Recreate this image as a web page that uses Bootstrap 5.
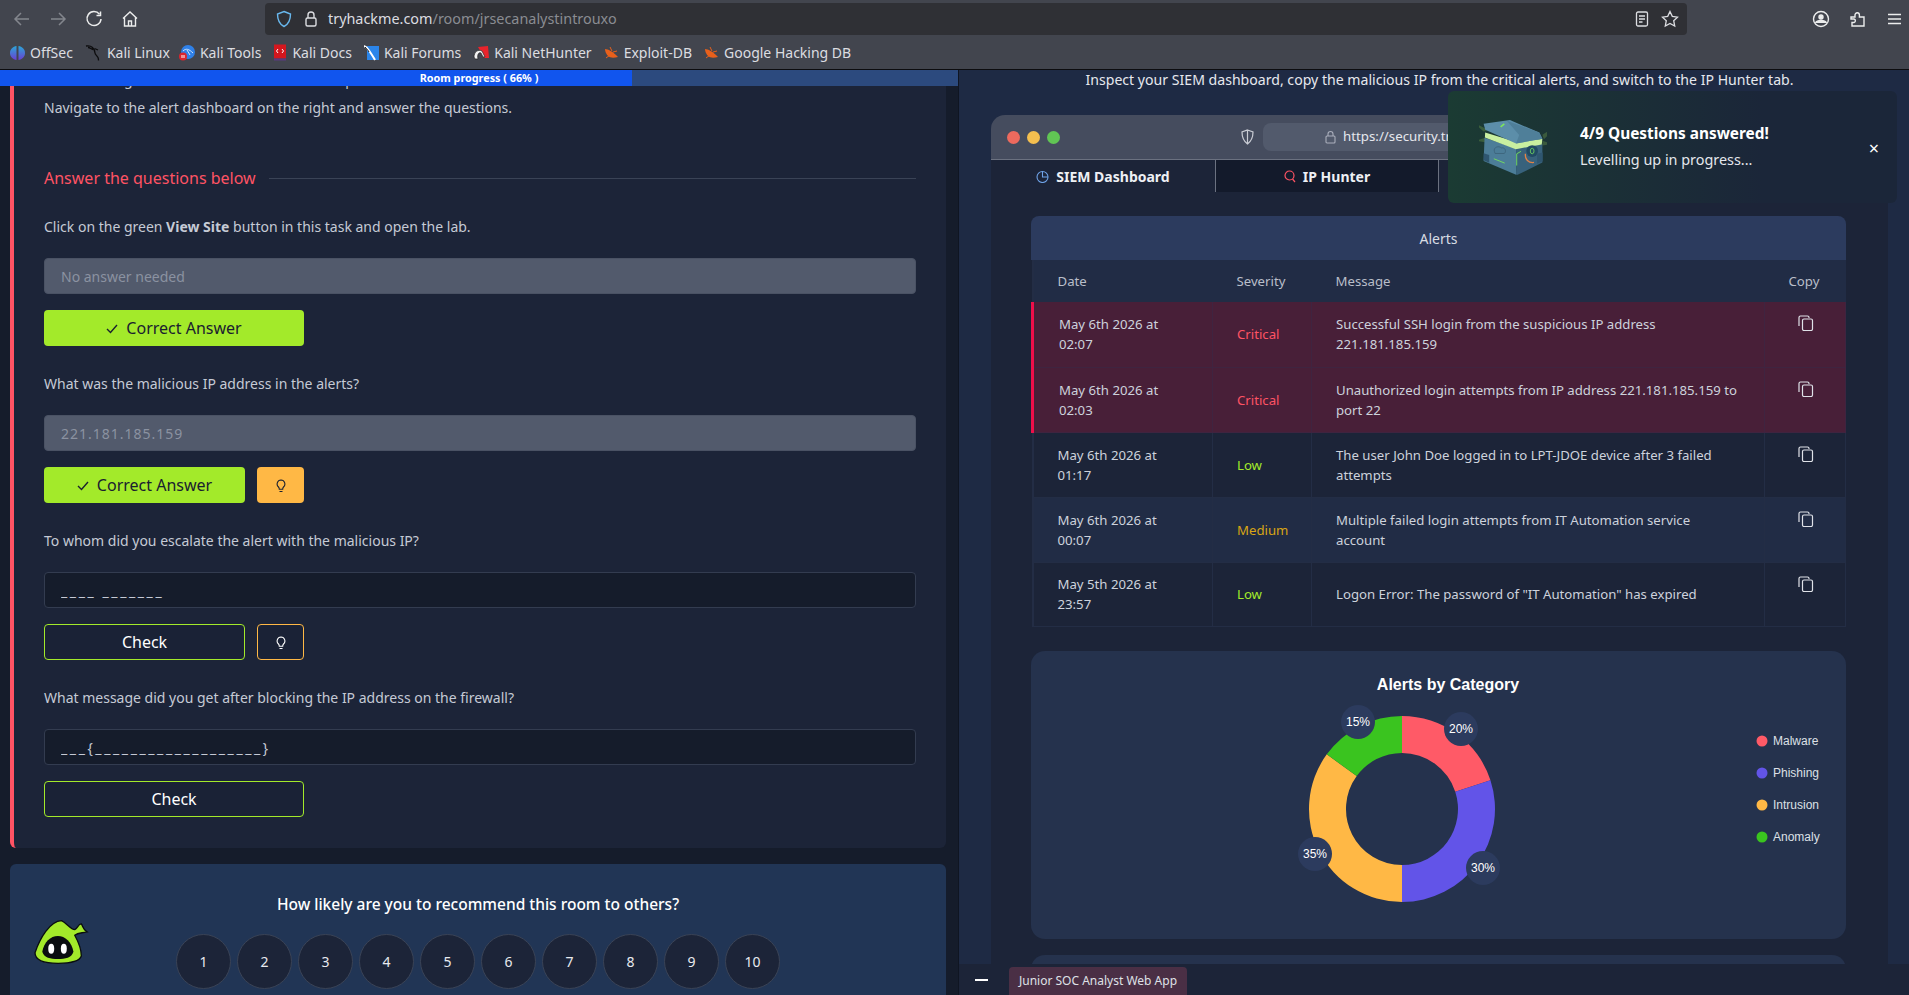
<!DOCTYPE html>
<html lang="en">
<head>
    <meta charset="UTF-8">
    <meta name="viewport" content="width=device-width, initial-scale=1.0">
    <title>TryHackMe | Junior Security Analyst Intro</title>
    <link href="https://cdn.jsdelivr.net/npm/bootstrap@5.3.0/dist/css/bootstrap.min.css" rel="stylesheet">
    <style>
        html, body { height: 995px; overflow: hidden; }
        body { background: #151c2b; font-family: "Noto Sans", sans-serif; font-size: 14px; color: #c5cad5; }

        /* browser chrome */
        .ff-chrome { height: 70px; background: #42454e; border-bottom: 1px solid #0c0c0f; color: #dcdde1; }
        .ff-nav { height: 36px; padding-top: 2px; }
        .ff-btns { width: 265px; padding-left: 13px; gap: 18px; }
        .ff-url { width: 1422px; height: 32px; background: #2f3035; border-radius: 4px; padding: 0 8px 0 11px; font-size: 14.4px; }
        .ff-url span { color: #dcdde1; margin-left: 2px !important; }
        .ff-url em { color: #8a8c92; font-style: normal; }
        .ff-right { gap: 19px; margin-left: 125px; }
        .ff-marks { height: 33px; padding-left: 10px; font-size: 14px; white-space: nowrap; }
        .ff-mark { gap: 5px; margin-right: 12px; }
        .ff-mark.ff-mark-tight { margin-right: 9px; }
        .ff-mark svg { flex: none; }

        .stage { height: 925px; }

        /* left column */
        .room-col { width: 958px; flex: none; background: #151c2b; overflow: hidden; }
        .room-progress { position: relative; z-index: 2; height: 16px; background: #2c4a7e; }
        .room-progress-fill { width: 66%; background: #1155ee; }
        .room-progress-text { position: absolute; inset: 0; text-align: center; line-height: 16px; font-size: 10.8px; font-weight: 700; color: #fff; }
        .task-box { margin: 0 12px 16px 10px; padding: 0 30px 31px; background: #1c2438; border-left: 4px solid #ff5364; border-radius: 0 0 6px 6px; line-height: 24px; }
        .task-lead { margin: -18px 0 4px; }
        .task-nav { margin: 0 0 46px; }
        .answer-head { color: #ff5364; font-size: 16px; height: 24px; margin-bottom: 24px; gap: 13px; }
        .answer-rule { height: 1px; background: #3a4356; }
        .q-block { margin-bottom: 25px; }
        .q-block:last-child { margin-bottom: 0; }
        .q-text { margin: 0 0 20px; padding-top: 1px; height: 24px; }
        .q-input { height: 36px; margin-bottom: 16px; padding: 0 16px; font-size: 14px; border: 1px solid #333c50; border-radius: 4px; }
        .q-input.form-control { background: #151c2b; color: #c5cad5; }
        .q-input.form-control::placeholder { color: #c5cad5; opacity: 1; }
        .q-input.form-control:disabled { background: #525a6c; border-color: #4a5264; }
        .q-input.form-control:disabled::placeholder { color: #8b92a1; }
        .q-input.q-ip::placeholder { letter-spacing: 1px; }
        .q-input.q-blank::placeholder { letter-spacing: 2.6px; }
        .q-btn { height: 36px; padding: 0 0 1px; font-size: 16px; border-radius: 4px; line-height: 1; }
        .q-wide { width: 260px; }
        .q-short { width: 201px; }
        .q-hint { width: 47px; margin-left: 12px; }
        .q-done, .q-done:disabled { background: #a3ea2a; border: 0; color: #1a2030; opacity: 1; }
        .q-check { background: #1a2236; border: 1px solid #a3ea2a; color: #fff; }
        .q-hint-on { background: #ffb845; border: 0; color: #1a2030; }
        .q-hint-off { background: #1a2236; border: 1px solid #ffb845; color: #fff; }

        .rate-box { margin: 0 12px 0 10px; height: 140px; background: #213555; border-radius: 6px 6px 0 0; display: grid; grid-template-columns: 1fr auto 1fr; }
        .rate-mascot { padding: 54px 0 0 23px; }
        .rate-title { margin: 29px 0 19px; text-align: center; color: #fff; font-size: 15.5px; font-weight: 500; line-height: 22px; }
        .rate-dots { gap: 6px; }
        .rate-dot { width: 55px; height: 55px; border-radius: 50%; background: #1c2438; border: 1px solid #3a4356; color: #e8eaef; display: flex; align-items: center; justify-content: center; font-size: 14px; }

        /* right column */
        .lab-col { position: relative; background: #1e2a44; border-left: 1px solid #0f1522; }
        .lab-scroll { height: 894px; overflow: hidden; padding: 0 23px 0 32px; }
        .lab-intro { height: 45px; text-align: center; color: #e6e8ee; font-size: 14.1px; line-height: 20px; }
        .mock-head { position: relative; height: 45px; background: #454c5e; border-radius: 14px 14px 0 0; border-bottom: 1px solid #6b7180; }
        .mock-dots { position: absolute; left: 16px; top: 16px; gap: 7px; }
        .mock-dot { width: 13px; height: 13px; border-radius: 50%; }
        .mock-shield { position: absolute; left: 250px; top: 14px; }
        .mock-url { position: absolute; left: 272px; top: 8px; width: 500px; height: 28px; background: #525a6c; border-radius: 8px; padding-left: 62px; gap: 7px; color: #e6e8ee; font-size: 13.3px; white-space: nowrap; overflow: hidden; }
        .mock-tabs { height: 32px; background: #1c2438; }
        .mock-tab { width: 223px; gap: 7px; border-right: 1px solid #6b7180; color: #eef0f4; font-weight: 700; font-size: 14px; }
        .mock-tab:first-child { width: 225px; }
        .mock-tab-off { background: #131a2b; }
        .mock-body { background: #1c2438; padding: 24px 42px 0 40px; }
        .alerts-box { border-radius: 8px 8px 0 0; overflow: hidden; }
        .alerts-title { height: 44px; background: #2c3b5e; color: #d8dce4; font-size: 14px; }
        .alerts-tbl { table-layout: fixed; width: 100%; font-size: 13.2px; line-height: 20px; --bs-table-bg: transparent; --bs-table-color: #cdd2dc; }
        .alerts-tbl th { height: 42px; padding: 0 0 0 24px; font-weight: 400; color: #b9bec9; background: #212c45; border: 0; vertical-align: middle; }
        .alerts-tbl td { height: 65px; padding: 0 24px; background: #1c2438; border: 0; border-right: 1px solid #232d45; border-bottom: 1px solid #232d45; vertical-align: middle; }
        .alerts-tbl th:first-child, .alerts-tbl td:first-child { border-left: 2px solid #232d45; }
        .alerts-tbl tr.row-crit td { background: #481f38; border-color: #3f2440; }
        .alerts-tbl tr.row-crit td:first-child { border-left: 3px solid #ef0f4a; padding-left: 25px; }
        .alerts-tbl tr.row-mid td { background: #212c45; }
        .alerts-tbl tr:last-child td { height: 64px; }
        .alerts-tbl td.cell-copy { vertical-align: top; padding: 10px 0 0 33px; }
        .sev-crit { color: #ff5364; }
        .sev-low { color: #a3ea2a; }
        .sev-mid { color: #d9a514; }
        .chart-box { margin-top: 24px; height: 288px; background: #25324d; border-radius: 14px; }
        .chart-box + .chart-box { margin-top: 16px; }
        .chart-txt { font-family: "Liberation Sans", sans-serif; }

        .lab-bar { height: 31px; background: #1c2438; padding-left: 16px; }
        .lab-min { width: 13px; height: 2px; background: #fff; margin-right: 21px; }
        .lab-tab { width: 178px; height: 28px; margin-top: 3px; background: #4a2f45; border-radius: 4px 4px 0 0; color: #dfe1e7; font-size: 12px; }

        .reward-toast { position: absolute; left: 489px; top: 21px; width: 449px; height: 112px; padding-left: 31px; border-radius: 6px; background: linear-gradient(90deg, #1b3b33 0, #1b3036 35%, #1b2639 70%); color: #fff; }
        .reward-chest { margin-right: 33px; }
        .reward-title { font-weight: 700; font-size: 15.4px; line-height: 24px; }
        .reward-sub { font-size: 14.4px; line-height: 24px; margin-top: 2px; color: #e4e7ec; }
        .reward-close { position: absolute; right: 18px; top: 47px; color: #fff; font-size: 18px; line-height: 20px; }
    </style>
</head>
<body>
    <!-- firefox toolbar -->
    <div class="ff-chrome">
        <div class="ff-nav d-flex align-items-center">
            <div class="ff-btns d-flex align-items-center">
                <svg width="18" height="18" viewBox="0 0 18 18" fill="none" stroke="#83868d" stroke-width="1.5"><path d="M16 9H2M8 3 2 9l6 6"/></svg>
                <svg width="18" height="18" viewBox="0 0 18 18" fill="none" stroke="#83868d" stroke-width="1.5"><path d="M2 9h14M10 3l6 6-6 6"/></svg>
                <svg width="18" height="18" viewBox="0 0 18 18" fill="none" stroke="#eceded" stroke-width="1.5"><path d="M14.5 4.2A7 7 0 1 0 16 9"/><path d="M15.5 1.5v4h-4" /></svg>
                <svg width="18" height="18" viewBox="0 0 18 18" fill="none" stroke="#eceded" stroke-width="1.4"><path d="M2 8.5 9 2l7 6.5M3.5 7.5V16h11V7.5M7.5 16v-5h3v5"/></svg>
            </div>
            <div class="ff-url d-flex align-items-center">
                <svg width="16" height="18" viewBox="0 0 16 18" fill="none" stroke="#69b8ee" stroke-width="1.4" class="me-2"><path d="M8 1.5 14.5 4c0 6-1.500 10-6.500 12.500C3 14 1.500 10 1.500 4z"/></svg>
                <svg width="14" height="18" viewBox="0 0 14 18" fill="none" stroke="#dcdde1" stroke-width="1.4" class="ms-1 me-2"><rect x="2" y="8" width="10" height="8" rx="1.500"/><path d="M4 8V5a3 3 0 0 1 6 0v3"/></svg>
                <span>tryhackme.com</span><em>/room/jrsecanalystintrouxo</em>
                <svg width="14" height="16" viewBox="0 0 14 16" fill="none" stroke="#dcdde1" stroke-width="1.300" class="ms-auto me-2"><rect x="1.500" y="1" width="11" height="14" rx="1.500"/><path d="M4 5h6M4 8h6M4 11h3.500"/></svg>
                <svg width="18" height="18" viewBox="0 0 18 18" fill="none" stroke="#dcdde1" stroke-width="1.300" class="ms-1"><path d="m9 1.500 2.300 4.900 5.200.7-3.800 3.600 1 5.300L9 13.400 4.300 16l1-5.300L1.500 7.100l5.200-.7z"/></svg>
            </div>
            <div class="ff-right d-flex align-items-center">
                <svg width="18" height="18" viewBox="0 0 18 18" fill="none" stroke="#eceded" stroke-width="1.400"><circle cx="9" cy="9" r="7.500"/><circle cx="9" cy="7" r="2" fill="#eceded"/><path d="M3.500 13c1-2 3-2.500 5.500-2.500s4.500.5 5.500 2.500" fill="#eceded"/></svg>
                <svg width="18" height="18" viewBox="0 0 18 18" fill="none" stroke="#eceded" stroke-width="1.400"><path d="M2 7h4V5a2.200 2.200 0 0 1 4.400 0v2H15v9H3v-3.500h2a1.800 1.800 0 0 0 0-3.500H2z"/></svg>
                <svg width="16" height="14" viewBox="0 0 16 14" stroke="#eceded" stroke-width="1.400"><path d="M2 2.500h13M2 7h13M2 11.500h13"/></svg>
            </div>
        </div>
        <div class="ff-marks d-flex align-items-center">
            <div class="ff-mark d-flex align-items-center">
                <svg width="15" height="16" viewBox="0 0 15 16"><defs><linearGradient id="oc" x1="0" y1="0" x2="0" y2="1"><stop offset="0" stop-color="#2ba6d8"/><stop offset="1" stop-color="#6a3fd0"/></linearGradient></defs><path d="M6.500 1C3 1.500 0 4 0 8s3 6.500 6.500 7z" fill="url(#oc)"/><path d="M8.500 1c3.500.5 6.500 3 6.500 7s-3 6.500-6.500 7z" fill="url(#oc)"/></svg>OffSec
            </div>
            <div class="ff-mark ff-mark-tight d-flex align-items-center">
                <svg width="17" height="17" viewBox="0 0 17 17" fill="none" stroke="#0c0c0e" stroke-width="1.300"><path d="M1 2c3-.5 5 0 6.500 1.500 2 2 2.500 3.500 2.500 5.500 0 1.500 2 2.500 3 4.500.4 1 .5 2 .5 3M3 3.500C5 3.500 6 5 8 5.500M9.500 4.500 13 6"/></svg>Kali Linux
            </div>
            <div class="ff-mark d-flex align-items-center">
                <svg width="16" height="16" viewBox="0 0 16 16"><circle cx="9" cy="7" r="7" fill="#2f80e8"/><path d="M4 6c3-3 6-2 10 2M8 5l3 5" stroke="#cfe4fb" fill="none"/><circle cx="4" cy="11.500" r="4" fill="#d9252e"/><path d="M3 10v3M5 10v3" stroke="#fff"/></svg>Kali Tools
            </div>
            <div class="ff-mark d-flex align-items-center">
                <svg width="14" height="17" viewBox="0 0 14 17"><rect x="1" y="0.500" width="12" height="14" fill="#d4171e"/><rect x="1" y="14.500" width="12" height="2" fill="#5a3a80"/><path d="M5 5 3.500 7 5 9M9 5l1.500 2L9 9" stroke="#fff" fill="none"/></svg>Kali Docs
            </div>
            <div class="ff-mark d-flex align-items-center">
                <svg width="15" height="16" viewBox="0 0 15 16"><path d="M3 1h12v14H3z" fill="#2b85ea"/><path d="M0 1c3 1 4 3 6 6s4 6 5 8" stroke="#fff" stroke-width="2" fill="none"/><path d="M1 2c2 2 3 3 4 5" stroke="#222" fill="none"/></svg>Kali Forums
            </div>
            <div class="ff-mark d-flex align-items-center">
                <svg width="16" height="16" viewBox="0 0 16 16"><path d="M5 2 15 1l1 12-5 0z" fill="#e8242c"/><path d="M1 12C1 7 5 4 9 6l3 6h-2L8 8C6 7 4 9 5 14H2z" fill="#f2f2f2" stroke="#222" stroke-width=".7"/></svg>Kali NetHunter
            </div>
            <div class="ff-mark d-flex align-items-center">
                <svg width="15" height="14" viewBox="0 0 15 14"><path d="M1 3c3 0 8 3 11 6l2 2c-4 1-8 1-10-1S1 5 1 3z" fill="#e8601c"/><path d="M6 1l2 4M2 12l4-3M13 5l-4 1" stroke="#e8601c" fill="none"/></svg>Exploit-DB
            </div>
            <div class="ff-mark d-flex align-items-center">
                <svg width="15" height="14" viewBox="0 0 15 14"><path d="M1 3c3 0 8 3 11 6l2 2c-4 1-8 1-10-1S1 5 1 3z" fill="#e8601c"/><path d="M6 1l2 4M2 12l4-3M13 5l-4 1" stroke="#e8601c" fill="none"/></svg>Google Hacking DB
            </div>
        </div>
    </div>

    <div class="stage d-flex">
        <!-- room column -->
        <div class="room-col">
            <div class="room-progress d-flex">
                <div class="room-progress-fill"></div>
                <div class="room-progress-text">Room progress ( 66% )</div>
            </div>
            <div class="task-box">
                <p class="task-lead">Click on the green View Site button above to open the attached lab.</p>
                <p class="task-nav">Navigate to the alert dashboard on the right and answer the questions.</p>
                <div class="answer-head d-flex align-items-center">
                    <span>Answer the questions below</span>
                    <div class="answer-rule flex-grow-1"></div>
                </div>

                <div class="q-block">
                    <p class="q-text">Click on the green <b>View Site</b> button in this task and open the lab.</p>
                    <input type="text" class="form-control q-input" placeholder="No answer needed" disabled>
                    <button class="btn q-btn q-done q-wide"><svg width="12" height="10" viewBox="0 0 12 10" fill="none" stroke="#1a2030" stroke-width="1.400" class="me-2"><path d="m1 5 3.500 3.500L11 1"/></svg>Correct Answer</button>
                </div>
                <div class="q-block">
                    <p class="q-text">What was the malicious IP address in the alerts?</p>
                    <input type="text" class="form-control q-input q-ip" placeholder="221.181.185.159" disabled>
                    <div class="d-flex">
                        <button class="btn q-btn q-done q-short"><svg width="12" height="10" viewBox="0 0 12 10" fill="none" stroke="#1a2030" stroke-width="1.400" class="me-2"><path d="m1 5 3.500 3.500L11 1"/></svg>Correct Answer</button>
                        <button class="btn q-btn q-hint q-hint-on"><svg width="10" height="14" viewBox="0 0 10 14" fill="none" stroke="#1a2030" stroke-width="1.100"><path d="M5 1a4 4 0 0 0-2.500 7c.6.600.8 1.500.8 2.200h3.400c0-.7.2-1.600.8-2.200A4 4 0 0 0 5 1zM3.500 12.500h3"/></svg></button>
                    </div>
                </div>
                <div class="q-block">
                    <p class="q-text">To whom did you escalate the alert with the malicious IP?</p>
                    <input type="text" class="form-control q-input q-blank" placeholder="____ _______">
                    <div class="d-flex">
                        <button class="btn q-btn q-check q-short">Check</button>
                        <button class="btn q-btn q-hint q-hint-off"><svg width="10" height="14" viewBox="0 0 10 14" fill="none" stroke="#fff" stroke-width="1.100"><path d="M5 1a4 4 0 0 0-2.500 7c.6.600.8 1.500.8 2.200h3.400c0-.7.2-1.600.8-2.200A4 4 0 0 0 5 1zM3.500 12.500h3"/></svg></button>
                    </div>
                </div>
                <div class="q-block">
                    <p class="q-text">What message did you get after blocking the IP address on the firewall?</p>
                    <input type="text" class="form-control q-input q-blank" placeholder="___{___________________}">
                    <button class="btn q-btn q-check q-wide">Check</button>
                </div>
            </div>

            <div class="rate-box">
                <div class="rate-mascot">
                    <svg width="57" height="48" viewBox="100 170 170 145">
                        <path d="M105 275C120 230 150 180 185 178c15 7 28 27 40 27 10-5 10-17 20-17 5 7 5 17 17 24-17 4-27 2-37 10 10 18 20 43 20 63-5 15-30 22-70 22s-70-7-70-32z" fill="#a3ea2a" stroke="#0a0d10" stroke-width="4"/>
                        <path d="M127 272c5-30 25-48 47-48s42 18 47 48c-5 18-25 22-47 22s-42-4-47-22z" fill="#0a0d10"/>
                        <ellipse cx="154" cy="263" rx="9" ry="15" fill="#fff"/>
                        <ellipse cx="192" cy="263" rx="9" ry="15" fill="#fff"/>
                    </svg>
                </div>
                <div>
                    <div class="rate-title">How likely are you to recommend this room to others?</div>
                    <div class="rate-dots d-flex">
                        <div class="rate-dot">1</div>
                        <div class="rate-dot">2</div>
                        <div class="rate-dot">3</div>
                        <div class="rate-dot">4</div>
                        <div class="rate-dot">5</div>
                        <div class="rate-dot">6</div>
                        <div class="rate-dot">7</div>
                        <div class="rate-dot">8</div>
                        <div class="rate-dot">9</div>
                        <div class="rate-dot">10</div>
                    </div>
                </div>
                <div></div>
            </div>
        </div>

        <!-- lab column -->
        <div class="lab-col flex-grow-1 d-flex flex-column">
            <div class="lab-scroll">
                <div class="lab-intro">Inspect your SIEM dashboard, copy the malicious IP from the critical alerts, and switch to the IP Hunter tab.</div>
                <div class="mock-head">
                    <div class="mock-dots d-flex">
                        <div class="mock-dot" style="background:#ed6a5e"></div>
                        <div class="mock-dot" style="background:#f5bf4f"></div>
                        <div class="mock-dot" style="background:#61c554"></div>
                    </div>
                    <svg class="mock-shield" width="13" height="16" viewBox="0 0 13 16" fill="none" stroke="#c9ccd4" stroke-width="1.200"><path d="M6.500 1 12 3c0 5-1.500 9-5.500 12C2.500 12 1 8 1 3zM6.500 1v14"/></svg>
                    <div class="mock-url d-flex align-items-center">
                        <svg width="11" height="14" viewBox="0 0 11 14" fill="none" stroke="#a9aebb" stroke-width="1.100"><rect x="1" y="6" width="9" height="7" rx="1"/><path d="M3 6V4a2.500 2.500 0 0 1 5 0v2"/></svg>
                        https://security.tryhackme.com
                    </div>
                </div>
                <div class="mock-tabs d-flex">
                    <div class="mock-tab d-flex align-items-center justify-content-center">
                        <svg width="13" height="13" viewBox="0 0 13 13" fill="none" stroke="#6fa3e8" stroke-width="1.100"><circle cx="6.500" cy="7" r="5.500"/><path d="M6.500 1.500V7H12"/></svg>SIEM Dashboard
                    </div>
                    <div class="mock-tab mock-tab-off d-flex align-items-center justify-content-center">
                        <svg width="12" height="13" viewBox="0 0 12 13" fill="none" stroke="#ff5364" stroke-width="1.200"><circle cx="5.500" cy="5.500" r="4.500"/><path d="m8.500 9 2.500 3"/></svg>IP Hunter
                    </div>
                </div>
                <div class="mock-body">
                    <div class="alerts-box">
                        <div class="alerts-title d-flex align-items-center justify-content-center">Alerts</div>
                        <table class="table alerts-tbl mb-0">
                            <colgroup><col style="width:180px"><col style="width:99px"><col style="width:453px"><col style="width:81px"></colgroup>
                            <thead>
                                <tr><th>Date</th><th>Severity</th><th>Message</th><th>Copy</th></tr>
                            </thead>
                            <tbody>
                                <tr class="row-crit">
                                    <td>May 6th 2026 at 02:07</td>
                                    <td class="sev-crit">Critical</td>
                                    <td>Successful SSH login from the suspicious IP address 221.181.185.159</td>
                                    <td class="cell-copy"><svg width="16" height="16" viewBox="0 0 16 16" fill="none" stroke="#dfe2e8" stroke-width="1.200"><path d="M11 3V2.500A1.500 1.500 0 0 0 9.500 1h-7A1.500 1.500 0 0 0 1 2.500V11"/><rect x="4.500" y="4" width="10" height="11.500" rx="1.500"/></svg></td>
                                </tr>
                                <tr class="row-crit">
                                    <td>May 6th 2026 at 02:03</td>
                                    <td class="sev-crit">Critical</td>
                                    <td>Unauthorized login attempts from IP address 221.181.185.159 to port 22</td>
                                    <td class="cell-copy"><svg width="16" height="16" viewBox="0 0 16 16" fill="none" stroke="#dfe2e8" stroke-width="1.200"><path d="M11 3V2.500A1.500 1.500 0 0 0 9.500 1h-7A1.500 1.500 0 0 0 1 2.500V11"/><rect x="4.500" y="4" width="10" height="11.500" rx="1.500"/></svg></td>
                                </tr>
                                <tr>
                                    <td>May 6th 2026 at 01:17</td>
                                    <td class="sev-low">Low</td>
                                    <td>The user John Doe logged in to LPT-JDOE device after 3 failed attempts</td>
                                    <td class="cell-copy"><svg width="16" height="16" viewBox="0 0 16 16" fill="none" stroke="#dfe2e8" stroke-width="1.200"><path d="M11 3V2.500A1.500 1.500 0 0 0 9.500 1h-7A1.500 1.500 0 0 0 1 2.500V11"/><rect x="4.500" y="4" width="10" height="11.500" rx="1.500"/></svg></td>
                                </tr>
                                <tr class="row-mid">
                                    <td>May 6th 2026 at 00:07</td>
                                    <td class="sev-mid">Medium</td>
                                    <td>Multiple failed login attempts from IT Automation service account</td>
                                    <td class="cell-copy"><svg width="16" height="16" viewBox="0 0 16 16" fill="none" stroke="#dfe2e8" stroke-width="1.200"><path d="M11 3V2.500A1.500 1.500 0 0 0 9.500 1h-7A1.500 1.500 0 0 0 1 2.500V11"/><rect x="4.500" y="4" width="10" height="11.500" rx="1.500"/></svg></td>
                                </tr>
                                <tr>
                                    <td>May 5th 2026 at 23:57</td>
                                    <td class="sev-low">Low</td>
                                    <td>Logon Error: The password of "IT Automation" has expired</td>
                                    <td class="cell-copy"><svg width="16" height="16" viewBox="0 0 16 16" fill="none" stroke="#dfe2e8" stroke-width="1.200"><path d="M11 3V2.500A1.500 1.500 0 0 0 9.500 1h-7A1.500 1.500 0 0 0 1 2.500V11"/><rect x="4.500" y="4" width="10" height="11.500" rx="1.500"/></svg></td>
                                </tr>
                            </tbody>
                        </table>
                    </div>

                    <div class="chart-box">
                        <svg width="815" height="288" viewBox="0 0 815 288" class="chart-txt d-block">
                            <text x="417" y="39" text-anchor="middle" fill="#fff" font-size="16" font-weight="700">Alerts by Category</text>
                            <path d="M371 65A93 93 0 0 1 459.45 129.26L424.26 140.7A56 56 0 0 0 371 102Z" fill="#ff5a67"/>
                            <path d="M459.45 129.26A93 93 0 0 1 371 251L371 214A56 56 0 0 0 424.26 140.7Z" fill="#6254e8"/>
                            <path d="M371 251A93 93 0 0 1 295.76 103.33L325.7 125.08A56 56 0 0 0 371 214Z" fill="#ffb845"/>
                            <path d="M295.76 103.33A93 93 0 0 1 371 65L371 102A56 56 0 0 0 325.7 125.08Z" fill="#3ac41f"/>
                            <g fill="#2c3b5e">
                                <circle cx="430" cy="78" r="17"/>
                                <circle cx="452" cy="217" r="17"/>
                                <circle cx="284" cy="203" r="17"/>
                                <circle cx="327" cy="71" r="17"/>
                            </g>
                            <g fill="#fff" font-size="12" text-anchor="middle">
                                <text x="430" y="82">20%</text>
                                <text x="452" y="221">30%</text>
                                <text x="284" y="207">35%</text>
                                <text x="327" y="75">15%</text>
                            </g>
                            <circle cx="731" cy="90" r="5.500" fill="#ff5a67"/>
                            <circle cx="731" cy="122" r="5.500" fill="#6254e8"/>
                            <circle cx="731" cy="154" r="5.500" fill="#ffb845"/>
                            <circle cx="731" cy="186" r="5.500" fill="#3ac41f"/>
                            <g fill="#dde0e6" font-size="12">
                                <text x="742" y="94">Malware</text>
                                <text x="742" y="126">Phishing</text>
                                <text x="742" y="158">Intrusion</text>
                                <text x="742" y="190">Anomaly</text>
                            </g>
                        </svg>
                    </div>
                    <div class="chart-box"></div>
                </div>
            </div>
            <div class="lab-bar d-flex align-items-center">
                <div class="lab-min"></div>
                <div class="lab-tab d-flex align-items-center justify-content-center">Junior SOC Analyst Web App</div>
            </div>

            <!-- reward toast -->
            <div class="reward-toast d-flex align-items-center">
                <svg class="reward-chest" width="68" height="66" viewBox="110 90 220 200">
                    <path d="M125 140 90 110l50 25zM315 150l50-30-45 45zM130 160l-30 10 30 5zM315 170l30 10-30 5z" fill="#a8e05a" opacity=".22"/>
                    <path d="M128 160 230 195v85L125 235z" fill="#4c7d98"/>
                    <path d="M230 195l85-15v60l-80 40h-5z" fill="#38627c"/>
                    <path d="M130 143 225 172l90-8-2 18-84 15-100-38z" fill="#c9efa0"/>
                    <path d="M125 115 210 103 305 143l10 20-85 16-100-45z" fill="#5c8ea9"/>
                    <path d="M200 105 305 143l10 20-85 16 10-28z" fill="#4f7f99"/>
                    <path d="M180 125l12-10" stroke="#7ee65a" stroke-width="5"/>
                    <path d="M160 205c-5-15 15-20 22-12 12-3 18 10 10 18h-30z" fill="none" stroke="#3a6078" stroke-width="2.500"/>
                    <path d="M158 228l35 14M232 250v-38l14-8" fill="none" stroke="#74e05f" stroke-width="3"/>
                    <circle cx="282" cy="203" r="19" fill="#214a63"/>
                    <ellipse cx="282" cy="203" rx="6" ry="9" fill="none" stroke="#74e05f" stroke-width="2.500"/>
                    <path d="M260 212c-2 18 10 30 28 28" fill="none" stroke="#e28247" stroke-width="4"/>
                    <path d="M125 210l18 6v25l-18-8zM298 212l18-4v28l-18 8z" fill="#2f5670"/>
                </svg>
                <div>
                    <div class="reward-title">4/9 Questions answered!</div>
                    <div class="reward-sub">Levelling up in progress...</div>
                </div>
                <div class="reward-close">×</div>
            </div>
        </div>
    </div>

    <script src="https://cdn.jsdelivr.net/npm/bootstrap@5.3.0/dist/js/bootstrap.bundle.min.js"></script>
</body>
</html>
